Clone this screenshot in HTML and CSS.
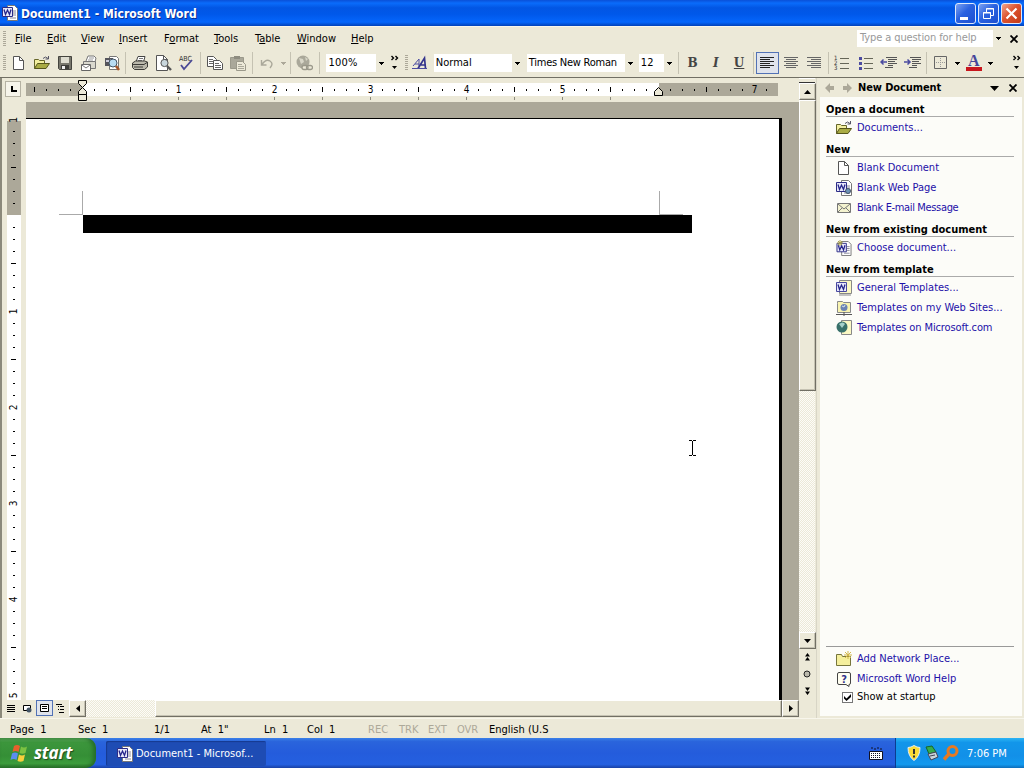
FILE: index.html
```html
<!DOCTYPE html>
<html lang="en">

<head>
    <meta charset="UTF-8">
    <meta name="viewport" content="width=device-width, initial-scale=1.0">
    <link rel="stylesheet" href="styles.css">
    <title>Document1 - Microsoft Word</title>
</head>

<body>

    <svg class="defs" width="0" height="0">
        <symbol id="page" viewBox="0 0 16 16">
            <path d="M2.500 1.500h6l4 4v9h-10z" fill="#fff" stroke="#555" />
            <path d="M8.500 1.500v4h4" fill="none" stroke="#555" />
        </symbol>
        <symbol id="folder" viewBox="0 0 16 16">
            <path d="M.5 13.500v-9h4l1 1h5v3" fill="#f3efa0" stroke="#66662a" />
            <path d="M.5 13.500l3-5h12l-3.500 5z" fill="#a9ab44" stroke="#55551c" />
            <path d="M9 3.500q2.500-3 5 0M14.500 1v3h-3" fill="none" stroke="#556" />
        </symbol>
        <symbol id="word" viewBox="0 0 16 16">
            <path d="M5.500 .5h7l3 3v12h-10z" fill="#fff" stroke="#777" />
            <path d="M11 6h3M11 8h3M11 10h3M8 13h6" stroke="#889" />
            <path d="M.5 2.500h10v9h-10z" fill="#e8e8fa" stroke="#2c2c86" />
            <path d="M2 4.500l1.500 5 2-4.500 2 4.500 1.500-5" fill="none" stroke="#25258a" stroke-width="1.300" />
        </symbol>
        <symbol id="down" viewBox="0 0 5 3">
            <path d="M0 0h5v1h-1v1h-1v1h-1v-1h-1v-1h-1z" />
        </symbol>
        <symbol id="more" viewBox="0 0 10 16">
            <path d="M1.500 1l2 2-2 2M5.500 1l2 2-2 2" fill="none" stroke="#000" stroke-width="1.400" />
            <path d="M2 11h5l-2.500 3z" />
        </symbol>
        <symbol id="close" viewBox="0 0 8 8">
            <path d="M.5 .5l7 7M7.500 .5l-7 7" stroke="#000" stroke-width="1.800" />
        </symbol>
        <pattern id="hticks" width="96" height="13" x="82" y="5" patternUnits="userSpaceOnUse">
            <path d="M12 6h1v2h-1zM24 6h1v2h-1zM36 6h1v2h-1zM48 4h1v5h-1zM60 6h1v2h-1zM72 6h1v2h-1zM84 6h1v2h-1z" />
        </pattern>
        <pattern id="vticks" width="15" height="96" y="113" patternUnits="userSpaceOnUse">
            <path d="M6 12h2v1h-2zM6 24h2v1h-2zM6 36h2v1h-2zM4 48h5v1h-5zM6 60h2v1h-2zM6 72h2v1h-2zM6 84h2v1h-2z" />
        </pattern>
        <pattern id="tabs" width="48" height="4" x="82" y="19" patternUnits="userSpaceOnUse">
            <path d="M0 0h1v3h-1z" fill="#8c8a7c" />
        </pattern>
    </svg>

    <div class="titlebar">
        <svg class="title-icon" width="16" height="16"><use href="#word" /></svg>
        <span class="title">Document1 - Microsoft Word</span>
        <div class="win-btn">
            <svg width="20" height="20"><path d="M4 13h8v3H4z" fill="#fff" /></svg>
        </div>
        <div class="win-btn">
            <svg width="20" height="20" fill="none" stroke="#fff">
                <path d="M7.500 8V4.500h7v7H12" /><path d="M7 5h8" />
                <path d="M4.500 8.500h7v6h-7z" /><path d="M4 9h8" />
            </svg>
        </div>
        <div class="win-btn win-close">
            <svg width="20" height="20"><path d="M4.500 4.500l10 10M14.500 4.500l-10 10" stroke="#fff" stroke-width="2.200" /></svg>
        </div>
    </div>

    <div class="menubar">
        <span class="grip"></span>
        <div class="menus">
            <span><u>F</u>ile</span>
            <span><u>E</u>dit</span>
            <span><u>V</u>iew</span>
            <span><u>I</u>nsert</span>
            <span>F<u>o</u>rmat</span>
            <span><u>T</u>ools</span>
            <span>T<u>a</u>ble</span>
            <span><u>W</u>indow</span>
            <span><u>H</u>elp</span>
        </div>
        <div class="question">Type a question for help</div>
        <svg class="q-arrow" width="5" height="3"><use href="#down" /></svg>
        <svg class="q-close" width="8" height="8"><use href="#close" /></svg>
    </div>

    <div class="toolbar">
        <span class="grip"></span>
        <span class="tool"><svg width="16" height="16"><use href="#page" /></svg></span>
        <span class="tool"><svg width="16" height="16"><use href="#folder" /></svg></span>
        <span class="tool"><svg width="16" height="16">
            <path d="M1.500 1.500h13v13h-12l-1-1z" fill="#77766c" stroke="#44443e" />
            <path d="M4 2h8v6H4z" fill="#dddccf" /><path d="M4 10h8v4H4z" fill="#3c3c38" /><path d="M5 11h3v3H5z" fill="#eee" />
        </svg></span>
        <span class="tool"><svg width="16" height="16">
            <path d="M5 6l2-5h6l2 2-1 4" fill="#fff" stroke="#777" /><path d="M8 3h5M7 5h5" stroke="#999" />
            <path d="M2.500 6.500h12v7h-12z" fill="#d9d8ce" stroke="#777" />
            <path d="M.5 9.500h9v6h-9z" fill="#fff" stroke="#666" /><path d="M1 10l4 3 4-3" fill="none" stroke="#777" />
        </svg></span>
        <span class="tool"><svg width="16" height="16">
            <path d="M5.500 1.500h7l2 2v11h-9z" fill="#fff" stroke="#777" />
            <path d="M1 3h8v8H1z" fill="#55555c" /><path d="M2 5h3v2H2zM6 4h2v2H6z" fill="#ccd" />
            <circle cx="9" cy="8" r="4" fill="#b8dcf4" stroke="#456" /><path d="M12 11l3 4" stroke="#a4562c" stroke-width="2.500" />
        </svg></span>
        <span class="sep"></span>
        <span class="tool"><svg width="16" height="16">
            <path d="M4 7l2-5.500h7L11.500 7" fill="#fff" stroke="#444" /><path d="M7 3.500h4M6 5.500h4" stroke="#777" />
            <path d="M.5 8l3-2h9l3 1v5l-3 2.500h-10l-2-2z" fill="#bbb9ac" stroke="#3c3c38" />
            <path d="M1 9.500h11l3-2M2 12h9" fill="none" stroke="#3c3c38" />
        </svg></span>
        <span class="tool"><svg width="17" height="16">
            <path d="M1.500 .5h7l4 4v11h-11z" fill="#fff" stroke="#555" /><path d="M8.500 .5v4h4" fill="none" stroke="#555" />
            <circle cx="9.500" cy="8" r="3.600" fill="#c8d6dc" stroke="#555" /><path d="M12 11l4 4" stroke="#555" stroke-width="2.400" />
        </svg></span>
        <span class="tool"><svg width="17" height="16">
            <text class="abc" x="1" y="6">ABC</text>
            <path d="M3 10l3 4 8-9" fill="none" stroke="#4a4a96" stroke-width="1.800" />
        </svg></span>
        <span class="sep"></span>
        <span class="tool"><svg width="16" height="16">
            <path d="M.5 1.500h6l3 3v7h-9z" fill="#fff" stroke="#555" /><path d="M2 4.500h4M2 6.500h5M2 8.500h5" stroke="#666" />
            <path d="M6.500 5.500h6l3 3v6h-9z" fill="#fff" stroke="#555" /><path d="M8 8.500h4M8 10.500h6M8 12.500h6" stroke="#666" />
        </svg></span>
        <span class="tool"><svg width="17" height="16">
            <path d="M.5 2.500h13v11H.5z" fill="#aaa89a" stroke="#9b998b" /><path d="M4 1h6v3H4z" fill="#8e8c80" />
            <path d="M6.500 6.500h6l3 3v6h-9z" fill="#ece9d8" stroke="#9b998b" /><path d="M8 9.500h4M8 11.500h6M8 13.500h6" stroke="#aaa89a" />
        </svg></span>
        <span class="sep"></span>
        <span class="tool"><svg width="16" height="16">
            <path d="M2.500 5v5h5M3 9.500q4-6 8-3.500t0 7" fill="none" stroke="#aaa89a" stroke-width="1.400" />
        </svg></span>
        <span class="drop off"><svg width="5" height="3"><use href="#down" /></svg></span>
        <span class="sep"></span>
        <span class="tool"><svg width="17" height="17">
            <circle cx="7" cy="7" r="6.500" fill="#aaa89a" /><path d="M3 3l4 1 1 3-3 2zM9 2l3 2-2 2z" fill="#d8d6c8" />
            <rect x="6" y="10.500" width="6" height="4" rx="2" fill="#ece9d8" stroke="#9b998b" stroke-width="1.300" />
            <rect x="10.500" y="10.500" width="6" height="4" rx="2" fill="none" stroke="#9b998b" stroke-width="1.300" />
        </svg></span>
        <span class="sep"></span>
        <div class="combo combo-zoom"><span>100%</span><svg width="5" height="3"><use href="#down" /></svg></div>
        <svg class="more" width="10" height="16"><use href="#more" /></svg>
        <span class="grip grip-2"></span>
        <span class="tool"><svg width="18" height="16" fill="none" stroke="#4b4ba0">
            <path d="M2 11L8 4l0 7M4 9h4" /><path d="M7 13.500L13.500 3l1 10.500M10 10h5" stroke="#34348c" stroke-width="1.700" /><path d="M1 13.500h15" />
        </svg></span>
        <div class="combo combo-style"><span>Normal</span><svg width="5" height="3"><use href="#down" /></svg></div>
        <div class="combo combo-font"><span>Times New Roman</span><svg width="5" height="3"><use href="#down" /></svg></div>
        <div class="combo combo-size"><span>12</span><svg width="5" height="3"><use href="#down" /></svg></div>
        <span class="sep"></span>
        <span class="tool letter"><b>B</b></span>
        <span class="tool letter"><i>I</i></span>
        <span class="tool letter"><u>U</u></span>
        <span class="sep"></span>
        <span class="tool active"><svg width="14" height="14"><path d="M0 1.500h14M0 3.500h10M0 5.500h14M0 7.500h10M0 9.500h14M0 11.500h10" stroke="#222" /></svg></span>
        <span class="tool"><svg width="14" height="14"><path d="M0 1.500h14M2 3.500h10M0 5.500h14M2 7.500h10M0 9.500h14M2 11.500h10" stroke="#666" /></svg></span>
        <span class="tool"><svg width="14" height="14"><path d="M0 1.500h14M4 3.500h10M0 5.500h14M4 7.500h10M0 9.500h14M4 11.500h10" stroke="#666" /></svg></span>
        <span class="sep"></span>
        <span class="tool"><svg width="16" height="16">
            <text class="num" x="0" y="5">1</text><text class="num" x="0" y="10">2</text><text class="num" x="0" y="15">3</text>
            <path d="M6 3.500h9M6 8.500h9M6 13.500h9" stroke="#666658" />
        </svg></span>
        <span class="tool"><svg width="16" height="16">
            <path d="M1 2h3v3H1zM1 7h3v3H1zM1 12h3v3H1z" fill="#4b4ba0" /><path d="M6 3.500h9M6 8.500h9M6 13.500h9" stroke="#666658" />
        </svg></span>
        <span class="tool"><svg width="17" height="14">
            <path d="M6 1.500h11M8 3.500h9M8 5.500h7M8 7.500h9M8 9.500h5M5 11.500h8" stroke="#555" />
            <path d="M7 6H1M3.500 3.500L1 6l2.500 2.500" fill="none" stroke="#4b4ba0" stroke-width="1.500" />
        </svg></span>
        <span class="tool"><svg width="17" height="14">
            <path d="M6 1.500h11M8 3.500h9M8 5.500h7M8 7.500h9M8 9.500h5M5 11.500h8" stroke="#555" />
            <path d="M0 6h6M3.500 3.500L6 6 3.500 8.500" fill="none" stroke="#4b4ba0" stroke-width="1.500" />
        </svg></span>
        <span class="sep"></span>
        <span class="tool border-tool"><svg width="14" height="14">
            <path d="M.5 .5h12v12H.5z" fill="none" stroke="#666" /><path d="M6.500 2v10M2 6.500h10" stroke="#999" stroke-dasharray="1 1" />
        </svg></span>
        <span class="drop"><svg width="5" height="3"><use href="#down" /></svg></span>
        <span class="tool fontcolor"><b>A</b></span>
        <span class="drop"><svg width="5" height="3"><use href="#down" /></svg></span>
        <svg class="more more-last" width="10" height="16"><use href="#more" /></svg>
    </div>

    <div class="workspace">
        <div class="editor">
            <div class="hruler">
                <div class="tabstop"></div>
                <svg width="796" height="24">
                    <path d="M26 5h752v13H26z" fill="#aca899" />
                    <path d="M82 5h577v13H82z" fill="#fff" />
                    <path d="M27 5h750v13H27z" fill="url(#hticks)" />
                    <path d="M90 19h560v4H90z" fill="url(#tabs)" />
                    <g class="ruler-num">
                        <text x="178.500" y="15">1</text>
                        <text x="274.500" y="15">2</text>
                        <text x="370.500" y="15">3</text>
                        <text x="466.500" y="15">4</text>
                        <text x="562.500" y="15">5</text>
                        <text x="754.500" y="15">7</text>
                    </g>
                    <g fill="#ece9d8" stroke="#000">
                        <path d="M78.500 2.500h8v3l-4 4-4-4z" />
                        <path d="M82.500 9.500l4 4v3h-8v-3z" />
                        <path d="M78.500 16.500h8v6h-8z" />
                        <path d="M658.500 9.500l4 4v4h-8v-4z" />
                    </g>
                </svg>
            </div>
            <div class="middle">
                <svg class="vruler" width="26" height="598">
                    <path d="M7 19h14v94H7z" fill="#aca899" />
                    <path d="M7 113h14v485H7z" fill="#fff" />
                    <path d="M0 23h15v571H0z" fill="url(#vticks)" transform="translate(7 0)" />
                    <g class="ruler-num">
                        <text transform="translate(17 18) rotate(-90)">1</text>
                        <text transform="translate(17 209.500) rotate(-90)">1</text>
                        <text transform="translate(17 305.500) rotate(-90)">2</text>
                        <text transform="translate(17 401.500) rotate(-90)">3</text>
                        <text transform="translate(17 497.500) rotate(-90)">4</text>
                        <text transform="translate(17 593.500) rotate(-90)">5</text>
                    </g>
                </svg>
                <div class="canvas">
                    <div class="sheet">
                        <div class="corners"><span class="corner-left"></span><span class="corner-right"></span></div>
                        <div class="selection"></div>
                        <svg class="ibeam" width="8" height="16"><path d="M0 .5h3M4 .5h3M3.500 1v14M0 15.500h3M4 15.500h3" stroke="#000" /></svg>
                    </div>
                </div>
            </div>
            <div class="bottombar">
                <div class="views">
                    <span><svg width="9" height="9"><path d="M0 1.500h8M0 3.500h8M0 5.500h8M0 7.500h8" stroke="#000" /></svg></span>
                    <span><svg width="9" height="9"><path d="M.5 1.500h7v5h-7z" fill="#fff" stroke="#000" /><circle cx="6" cy="6" r="2.500" fill="#456" /></svg></span>
                    <span class="active"><svg width="9" height="9"><path d="M.5 .5h8v7h-8z" fill="#fff" stroke="#000" /><path d="M2 2.500h5M2 4.500h5" stroke="#000" /></svg></span>
                    <span><svg width="9" height="9"><path d="M0 .5h6M2 2.500h1M4 2.500h4M2 5.500h1M4 5.500h4M3 8.500h5" stroke="#000" /></svg></span>
                </div>
                <div class="btn3d"><svg width="4" height="7"><path d="M4 0v7L0 3.500z" /></svg></div>
                <div class="track htrack"></div>
                <div class="btn3d hthumb"></div>
                <div class="btn3d"><svg width="4" height="7"><path d="M0 0v7l4-3.500z" /></svg></div>
            </div>
        </div>
        <div class="vscroll">
            <div class="split"></div>
            <div class="btn3d vbtn"><svg width="7" height="4"><path d="M0 4h7L3.500 0z" /></svg></div>
            <div class="btn3d vthumb"></div>
            <div class="track vtrack"></div>
            <div class="btn3d vbtn"><svg width="7" height="4"><path d="M0 0h7L3.500 4z" /></svg></div>
            <div class="browse">
                <svg width="7" height="8"><path d="M1 3.500h5L3.500 0zM1 7.500h5L3.500 4z" /></svg>
                <svg width="8" height="8"><circle cx="4" cy="4" r="3" fill="#bbb9ac" stroke="#222" /></svg>
                <svg width="7" height="8"><path d="M1 .5h5L3.500 4zM1 4.500h5L3.500 8z" /></svg>
            </div>
        </div>

        <div class="taskpane">
            <div class="pane-head">
                <svg width="28" height="10" fill="#aca899"><path d="M0 5l5-5v3h4v4H5v3zM27 5l-5-5v3h-4v4h4v3z" /></svg>
                <b>New Document</b>
                <svg class="pane-arrow" width="9" height="5"><path d="M0 0h9L4.500 5z" /></svg>
                <svg width="8" height="8"><use href="#close" /></svg>
            </div>
            <div class="pane-body">
                <h3>Open a document</h3>
                <a><svg width="16" height="16"><use href="#folder" /></svg>Documents...</a>
                <h3>New</h3>
                <a><svg width="16" height="16"><use href="#page" /></svg>Blank Document</a>
                <a><svg width="16" height="16"><use href="#word" /><circle cx="12" cy="11" r="2.500" fill="#6d93b8" stroke="#456" /></svg>Blank Web Page</a>
                <a class="tight"><svg width="16" height="16"><path d="M1.500 3.500h13v9h-13z" fill="#f4f3cf" stroke="#777" /><path d="M2 4l6 5 6-5M2 12l4-4M14 12l-4-4" fill="none" stroke="#777" /></svg>Blank E-mail Message</a>
                <h3>New from existing document</h3>
                <a><svg width="16" height="16"><use href="#word" y="1" width="16" height="15" /><path d="M4 0v6M1 3h6M2 1l4 4M6 1L2 5" stroke="#a8a04c" /></svg>Choose document...</a>
                <h3>New from template</h3>
                <a><svg width="16" height="16"><path d="M3.500 .5h12v13h-12z" fill="#fbf8c4" stroke="#888" /><path d="M.5 2.500h10v9H.5z" fill="#e8e8fa" stroke="#4848a0" /><path d="M2 4.500l1.500 5 2-4.500 2 4.500L9 4.500" fill="none" stroke="#25258a" stroke-width="1.300" /><path d="M3 15h12" stroke="#888" /></svg>General Templates...</a>
                <a><svg width="16" height="16"><path d="M1.500 3.500v-2h5l1 1h7v10h-13z" fill="#f8f4b0" stroke="#888" /><circle cx="8" cy="7.500" r="3.500" fill="#6b82b4" /><path d="M6 6l2 1 1-2" fill="none" stroke="#d8e8e8" /><path d="M0 14.500h16M8 12v4" stroke="#555" /></svg>Templates on my Web Sites...</a>
                <a class="tight-last"><svg width="16" height="16"><path d="M5.500 .5h10v14h-10z" fill="#fbf8c4" stroke="#888" /><circle cx="6" cy="7" r="5.500" fill="#38706a" /><path d="M3 4q4-3 6 0L6 8z" fill="#a5d0ca" /></svg>Templates on Microsoft.com</a>

                <div class="pane-foot">
                    <a><svg width="16" height="16"><path d="M.5 14.500v-11h5l1 2h8v9z" fill="#f5ef9c" stroke="#77763c" /><path d="M12 0v8M8 4h8M9 1l6 6M15 1L9 7" stroke="#d2b84c" /></svg>Add Network Place...</a>
                    <a><svg width="16" height="16"><path d="M3 1.500h10q1.500 0 1.500 1.500v9q0 1.500-1.500 1.500v2l-3-2H3q-1.500 0-1.500-1.500V3Q1.500 1.500 3 1.500z" fill="#fffef0" stroke="#444" /><text class="help" x="8" y="12">?</text></svg>Microsoft Word Help</a>
                    <label><span class="check"><svg width="7" height="7"><path d="M0 2l2.500 2.500L7 0v3L2.500 7 0 4.500z" /></svg></span>Show at startup</label>
                </div>
            </div>
        </div>
    </div>

    <div class="statusbar">
        <span>Page&nbsp; 1</span>
        <span>Sec&nbsp; 1</span>
        <span>1/1</span>
        <span>At&nbsp; 1"</span>
        <span>Ln&nbsp; 1</span>
        <span>Col&nbsp; 1</span>
        <span class="off">REC</span>
        <span class="off">TRK</span>
        <span class="off">EXT</span>
        <span class="off">OVR</span>
        <span>English (U.S</span>
    </div>

    <div class="taskbar">
        <div class="start">
            <svg width="20" height="20">
                <path d="M4 3q3-2 6 0L8.500 9q-3-2-6 0z" fill="#e8602c" />
                <path d="M11 3.500q3 2 6 0L15.500 10q-3 1.500-6 0z" fill="#7cc242" />
                <path d="M2 10.500q3-2 6 0L6.500 17q-3-2-6 0z" fill="#5b8df0" />
                <path d="M9 11.500q3 2 6 0L13.500 18q-3 1.500-6 0z" fill="#f8cf3c" />
            </svg>
            <span>start</span>
        </div>
        <div class="task">
            <svg width="16" height="16"><use href="#word" /></svg>
            <span>Document1 - Microsof...</span>
        </div>
        <svg class="keyboard" width="14" height="13">
            <path d="M3 0v2M6 1v2M9 0v2M12 1v2" stroke="#112" /><path d="M.5 4.500h13v8H.5z" fill="#fff" stroke="#112" />
            <path d="M2 6.500h10M2 8.500h10M2 10.500h10" stroke="#112" stroke-dasharray="1 1" />
        </svg>
        <div class="tray">
            <svg width="14" height="16"><path d="M7 .5q3 2 6 2 0 9-6 13Q1 11.500 1 2.500q3 0 6-2z" fill="#fbdc36" stroke="#e9eef2" /><path d="M6 4h2v5H6zM6 10.500h2v2H6z" fill="#333" /></svg>
            <svg width="16" height="16"><path d="M2 2l6-1 4 6-7 2z" fill="#35ac4c" stroke="#17662a" /><path d="M4 9l8-2 2 5-7 3z" fill="#c9d5da" stroke="#445" /><path d="M6 11l5-1" stroke="#445" /></svg>
            <svg width="16" height="16" fill="none" stroke="#e77a22"><circle cx="9.500" cy="6" r="4.500" stroke-width="3" /><path d="M6 9l-5 5.500" stroke-width="3.500" /></svg>
            <span>7:06 PM</span>
        </div>
    </div>

</body>

</html>
```
FILE: styles.css
```css
* {
    box-sizing: border-box;
}

body {
    margin: 0;
    width: 1024px;
    height: 768px;
    overflow: hidden;
    display: flex;
    flex-direction: column;
    background-color: #ece9d8;
    color: #000;
    font-family: "DejaVu Sans Condensed", "DejaVu Sans", sans-serif;
    font-size: 11px;
    line-height: 14px;
    white-space: nowrap;
}

svg {
    display: block;
    flex: none;
}

.defs {
    position: absolute;
}

/* title bar */
.titlebar {
    display: flex;
    align-items: center;
    height: 26px;
    padding: 0 2px;
    background: linear-gradient(#0a50d8, #0a6cfb 12%, #0256e4 30%, #0058ea 55%, #0566fc 85%, #0241b8);
}

.title {
    flex: 1;
    margin-left: 3px;
    padding-top: 1px;
    color: #fff;
    font-size: 12px;
    font-weight: bold;
    letter-spacing: 0.05px;
    text-shadow: 1px 1px #0a2f94;
}

.win-btn {
    width: 21px;
    height: 21px;
    margin-left: 2px;
    border: 1px solid #dfe9fb;
    border-radius: 3px;
    background: linear-gradient(135deg, #7ba1f2, #2a62e0 45%, #1c4fd0);
}

.win-close {
    background: linear-gradient(135deg, #f0a58c, #dd5330 45%, #c23a16);
}

/* menus */
.menubar {
    display: flex;
    align-items: center;
    height: 24px;
    border-top: 1px solid #f8f6ec;
}

.grip {
    flex: none;
    width: 3px;
    height: 16px;
    margin: 0 1px 0 3px;
    background: repeating-linear-gradient(#aca899 0 1px, transparent 1px 2px);
}

.menus {
    display: grid;
    grid-template-columns: 32px 34px 38px 45px 50px 41px 42px 54px auto;
    margin-left: 8px;
    flex: 1;
}

.question {
    width: 136px;
    height: 17px;
    padding: 1px 3px;
    background-color: #fff;
    color: #999;
    letter-spacing: -0.1px;
}

.q-arrow {
    margin: 0 9px 0 3px;
}

.q-close {
    margin-right: 6px;
}

/* toolbar */
.toolbar {
    display: flex;
    align-items: center;
    height: 27px;
    padding-bottom: 1px;
}

.tool {
    flex: none;
    display: flex;
    align-items: center;
    justify-content: center;
    width: 23.3px;
    height: 22px;
}

.tool.active,
.views .active {
    background-color: #dfe3ec;
    border: 1px solid #5272b5;
}

.sep {
    flex: none;
    width: 1px;
    height: 22px;
    margin: 0 2px;
    background-color: #c5c2b2;
}

.drop {
    flex: none;
    display: flex;
    justify-content: center;
    width: 10px;
}

.drop.off {
    fill: #aca899;
}

.abc {
    font-size: 7px;
    fill: #333;
}

.num {
    font-size: 6px;
    fill: #333;
}

.combo {
    flex: none;
    display: flex;
    align-items: center;
    justify-content: space-between;
    height: 18px;
    padding: 0 3px 0 2px;
    background: linear-gradient(#ece9d8, #ece9d8) right / 11px 100% no-repeat #fff;
}

.combo-zoom {
    width: 61px;
    margin-left: 4px;
}

.combo-zoom span {
    margin-left: 1px;
    letter-spacing: 0.2px;
}

.combo-style {
    width: 89px;
    margin-left: 2px;
}

.combo-font {
    width: 109px;
    margin-left: 4px;
}

.combo-font span {
    letter-spacing: -0.25px;
}

.combo-size {
    width: 36px;
    margin: 0 1px 0 3px;
}

.more {
    margin-left: 3px;
}

.more-last {
    margin-left: 17px;
}

.grip-2 {
    margin-left: 5px;
}

.letter {
    color: #444;
    font-family: "DejaVu Serif", serif;
    font-size: 12px;
    font-weight: bold;
}

.border-tool {
    padding-left: 2px;
}

.fontcolor b {
    width: 16px;
    height: 16px;
    border-bottom: 4px solid #c8161d;
    color: #46469a;
    font-family: "Liberation Serif", serif;
    font-size: 16px;
    line-height: 12px;
    text-align: center;
}

/* editor window */
.workspace {
    display: flex;
    height: 641px;
    border-top: 1px solid #716f64;
}

.editor {
    width: 799px;
    border-left: 2px solid #8b897b;
}

.hruler {
    display: flex;
    height: 24px;
}

.hruler svg {
    margin-left: -21px;
}

.tabstop {
    flex: none;
    width: 16px;
    height: 16px;
    margin: 3px 0 0 3px;
    border: 1px solid #b5b2a3;
    background: linear-gradient(#000, #000) 5px 4px / 2px 6px no-repeat, linear-gradient(#000, #000) 5px 8px / 6px 2px no-repeat, #f6f4ea;
}

.ruler-num {
    font-size: 10px;
    text-anchor: middle;
}

.middle {
    display: flex;
    height: 598px;
}

.vruler {
    margin-left: -2px;
}

.canvas {
    flex: 1;
    padding-top: 16px;
    background-color: #aca899;
}

.sheet {
    position: relative;
    width: 756px;
    height: 582px;
    padding: 72px 0 0 33px;
    border-top: 1px solid #000;
    border-right: 3px solid #000;
    background-color: #fff;
}

.corners {
    display: flex;
    justify-content: space-between;
    width: 624px;
    height: 24px;
}

.corners span {
    width: 24px;
    border-bottom: 1px solid #aaa;
}

.corner-left {
    border-right: 1px solid #aaa;
}

.corner-right {
    border-left: 1px solid #aaa;
}

.selection {
    width: 609px;
    height: 18px;
    margin-left: 24px;
    background-color: #000;
}

/* mouse pointer over the page */
.ibeam {
    position: absolute;
    left: 663px;
    top: 321px;
}

.bottombar {
    display: flex;
    height: 17px;
}

.views {
    display: flex;
    width: 67px;
    padding-left: 1px;
}

.views span {
    display: flex;
    align-items: center;
    justify-content: center;
    width: 17px;
    height: 16px;
}

.btn3d {
    flex: none;
    display: flex;
    align-items: center;
    justify-content: center;
    width: 17px;
    height: 17px;
    background-color: #ece9d8;
    border: 1px solid #fff;
    border-right-color: #716f64;
    border-bottom-color: #716f64;
    box-shadow: inset -1px -1px #c5c2b2;
}

.track {
    background: repeating-conic-gradient(#ece9d8 0 25%, #fdfcf8 0 50%) 0 0 / 2px 2px;
}

.htrack {
    width: 69px;
}

.bottombar .hthumb {
    flex: 1;
    width: auto;
}

.vscroll {
    display: flex;
    flex-direction: column;
    width: 18px;
    padding-right: 1px;
    border-right: 1px solid #d8d5c6;
}

.split {
    height: 5px;
    border-top: 1px solid #fff;
    border-bottom: 1px solid #333;
}

.vbtn {
    height: 17px;
}

.vthumb {
    height: 291px;
}

.vtrack {
    height: 241px;
}

.browse {
    display: flex;
    flex-direction: column;
    align-items: center;
    gap: 9px;
    padding-top: 4px;
}

/* task pane */
.taskpane {
    flex: 1;
    display: flex;
    flex-direction: column;
    margin-left: 3px;
    padding-bottom: 2px;
}

.pane-head {
    display: flex;
    align-items: center;
    height: 19px;
    padding: 1px 7px 0 5px;
    letter-spacing: -0.1px;
}

.pane-head b {
    flex: 1;
    margin-left: 5px;
}

.pane-arrow {
    margin-right: 10px;
}

.pane-body {
    flex: 1;
    display: flex;
    flex-direction: column;
    margin-right: 2px;
    padding: 0 8px 0 6px;
    background-color: #fcfcf8;
}

.pane-body h3 {
    flex: none;
    height: 16px;
    margin: 4px 0 0;
    padding-top: 2px;
    border-bottom: 1px solid #aaa;
    font-size: 11px;
}

.pane-body a {
    display: flex;
    align-items: center;
    gap: 5px;
    height: 20px;
    padding-left: 10px;
    color: #1c10a8;
}

.pane-body h3 + a {
    height: 21px;
    padding-top: 1px;
}

.pane-body h3 ~ h3 {
    margin-top: 3px;
}

.tight {
    letter-spacing: -0.35px;
}

.tight-last {
    letter-spacing: -0.1px;
}

.pane-foot {
    height: 70px;
    margin-top: auto;
    padding-top: 2px;
    border-top: 1px solid #999;
}

.pane-foot label {
    display: flex;
    align-items: center;
    gap: 4px;
    height: 16px;
    padding-left: 16px;
}

.check {
    display: flex;
    align-items: center;
    justify-content: center;
    width: 11px;
    height: 11px;
    border: 1px solid #777;
    background-color: #fff;
}

.help {
    font-size: 11px;
    font-weight: bold;
    fill: #33338c;
    text-anchor: middle;
}

/* status bar */
.statusbar {
    display: grid;
    grid-template-columns: 68px 76px 47px 63px 43px 61px 31px 29px 29px 32px auto;
    align-items: center;
    height: 20px;
    padding: 2px 0 0 10px;
    border-top: 1px solid #f8f6ec;
}

.off {
    color: #aca899;
}

/* windows taskbar */
.taskbar {
    display: flex;
    align-items: center;
    height: 30px;
    background: linear-gradient(#3a80e8, #2a64dc 12%, #245cdc 50%, #2560e0 88%, #1941a5);
    color: #fff;
}

.start {
    display: flex;
    align-items: center;
    width: 96px;
    height: 30px;
    padding-left: 10px;
    border-radius: 0 10px 10px 0;
    background: linear-gradient(#5aa85a, #3c963c 15%, #358f36 60%, #3c9c3c 85%, #287028);
    box-shadow: inset -3px 0 4px #256c28;
}

.start span {
    margin-left: 4px;
    font-family: "Open Sans", sans-serif;
    font-size: 17px;
    font-style: italic;
    font-weight: bold;
    letter-spacing: -0.2px;
    text-shadow: 1px 1px 1px #1d4a1d;
}

.task {
    display: flex;
    align-items: center;
    gap: 3px;
    width: 160px;
    height: 25px;
    margin-left: 10px;
    padding: 2px 0 0 11px;
    border-radius: 2px;
    background-color: #1e4cb4;
    box-shadow: inset 1px 1px 1px #163a90;
}

.keyboard {
    margin-left: auto;
}

.tray {
    display: flex;
    align-items: center;
    gap: 3px;
    width: 129px;
    height: 30px;
    margin-left: 12px;
    padding-left: 11px;
    border-left: 1px solid #0c3c90;
    background: linear-gradient(#2bb4f4, #1296ea 15%, #1290e8 60%, #1399ee 88%, #0d6dba);
}

.tray span {
    margin-left: 5px;
    padding-top: 1px;
}
```
